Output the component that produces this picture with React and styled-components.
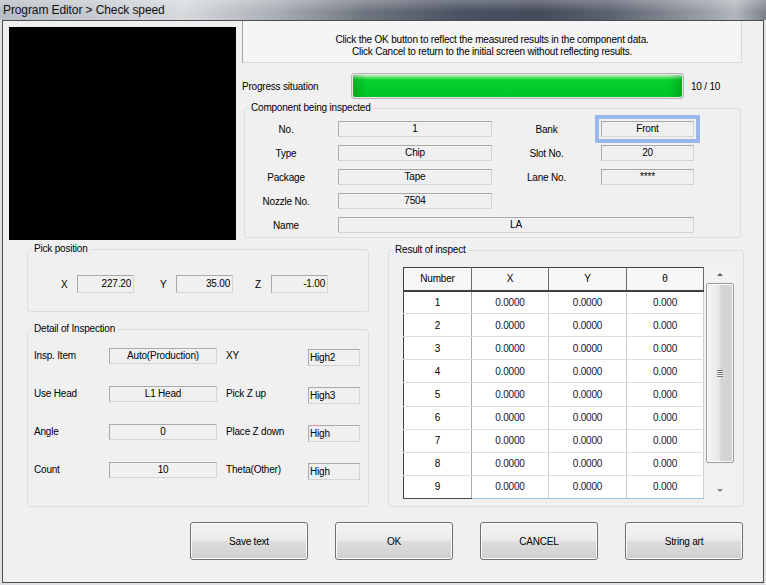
import React from 'react';
import styled, { createGlobalStyle } from 'styled-components';

const GlobalStyle = createGlobalStyle`
  html, body {
    margin: 0;
    padding: 0;
    background: #e2e4e7;
  }
  body {
    font-family: "Liberation Sans", Arial, sans-serif;
    font-size: 10px;
    letter-spacing: -0.2px;
    color: #000;
  }
  * {
    box-sizing: border-box;
  }
`;

const component = [
  { label: 'No.', value: '1', side: 'Bank', sideValue: 'Front', focus: true },
  { label: 'Type', value: 'Chip', side: 'Slot No.', sideValue: '20' },
  { label: 'Package', value: 'Tape', side: 'Lane No.', sideValue: '****' },
  { label: 'Nozzle No.', value: '7504' },
];

const details = [
  { label: 'Insp. Item', value: 'Auto(Production)', side: 'XY', sideValue: 'High2' },
  { label: 'Use Head', value: 'L1 Head', side: 'Pick Z up', sideValue: 'High3' },
  { label: 'Angle', value: '0', side: 'Place Z down', sideValue: 'High' },
  { label: 'Count', value: '10', side: 'Theta(Other)', sideValue: 'High' },
];

const results = [1, 2, 3, 4, 5, 6, 7, 8, 9].map((n) => ({
  n,
  x: '0.0000',
  y: '0.0000',
  t: '0.000',
}));

function App() {
  return (
    <Window>
      <GlobalStyle />
      <TitleBar>Program Editor &gt; Check speed</TitleBar>
      <Client>
        <TopSection>
          <Camera />
          <RightColumn>
            <MessageBox>
              <div>Click the OK button to reflect the measured results in the component data.</div>
              <div>Click Cancel to return to the initial screen without reflecting results.</div>
            </MessageBox>
            <ProgressRow>
              <ProgressLabel>Progress situation</ProgressLabel>
              <ProgressBar>
                <ProgressFill />
              </ProgressBar>
              <ProgressCount>10 / 10</ProgressCount>
            </ProgressRow>
            <ComponentGroup>
              <Legend>Component being inspected</Legend>
              <ComponentGrid>
                {component.map((row) => (
                  <React.Fragment key={row.label}>
                    <CenterLabel $pad={11}>{row.label}</CenterLabel>
                    <Field $align="center">{row.value}</Field>
                    {row.side ? (
                      <>
                        <CenterLabel>{row.side}</CenterLabel>
                        <Field $align="center" $focus={row.focus}>
                          {row.sideValue}
                        </Field>
                      </>
                    ) : (
                      <>
                        <span />
                        <span />
                      </>
                    )}
                  </React.Fragment>
                ))}
                <CenterLabel $pad={11}>Name</CenterLabel>
                <Field $align="center" $span={3}>
                  LA
                </Field>
              </ComponentGrid>
            </ComponentGroup>
          </RightColumn>
        </TopSection>

        <MiddleSection>
          <LeftColumn>
            <PickGroup>
              <Legend>Pick position</Legend>
              <PickRow>
                <PickLabel $offset={33}>X</PickLabel>
                <PickField>227.20</PickField>
                <PickLabel $offset={26}>Y</PickLabel>
                <PickField>35.00</PickField>
                <PickLabel $offset={22}>Z</PickLabel>
                <PickField>-1.00</PickField>
              </PickRow>
            </PickGroup>
            <DetailGroup>
              <Legend>Detail of Inspection</Legend>
              <DetailGrid>
                {details.map((row) => (
                  <React.Fragment key={row.label}>
                    <DetailLabel>{row.label}</DetailLabel>
                    <Field $align="center">{row.value}</Field>
                    <DetailLabel $indent={9}>{row.side}</DetailLabel>
                    <SmallField>{row.sideValue}</SmallField>
                  </React.Fragment>
                ))}
              </DetailGrid>
            </DetailGroup>
          </LeftColumn>

          <ResultGroup>
            <Legend>Result of inspect</Legend>
            <TableWrap>
              <Table>
                <colgroup>
                  <col style={{ width: 68 }} />
                  <col style={{ width: 77 }} />
                  <col style={{ width: 78 }} />
                  <col style={{ width: 77 }} />
                </colgroup>
                <thead>
                  <tr>
                    <Th>Number</Th>
                    <Th>X</Th>
                    <Th>Y</Th>
                    <Th>θ</Th>
                  </tr>
                </thead>
                <tbody>
                  {results.map((r, i) => (
                    <tr key={r.n}>
                      <NumCell $last={i === results.length - 1}>{r.n}</NumCell>
                      <Td $last={i === results.length - 1}>{r.x}</Td>
                      <Td $last={i === results.length - 1}>{r.y}</Td>
                      <Td $last={i === results.length - 1}>{r.t}</Td>
                    </tr>
                  ))}
                </tbody>
              </Table>
              <ScrollBar>
                <ArrowUp />
                <Thumb>
                  <Grip />
                </Thumb>
                <ArrowDown />
              </ScrollBar>
            </TableWrap>
          </ResultGroup>
        </MiddleSection>

        <ButtonRow>
          <Button>Save text</Button>
          <Button>OK</Button>
          <Button>CANCEL</Button>
          <Button>String art</Button>
        </ButtonRow>
      </Client>
    </Window>
  );
}

const Window = styled.div`
  width: 766px;
  height: 585px;
  display: flex;
  flex-direction: column;
  background: #dfe1e4;
  overflow: hidden;
`;

const TitleBar = styled.div`
  height: 20px;
  line-height: 20px;
  padding-left: 3px;
  font-size: 12px;
  letter-spacing: -0.1px;
  color: #111;
  background:
    linear-gradient(to bottom, rgba(255, 255, 255, 0.25), rgba(255, 255, 255, 0) 60%),
    linear-gradient(
      90deg,
      #b8bdc4 0%,
      #cdd1d6 18%,
      #d7dadd 24%,
      #a9aeb5 36%,
      #6d737e 48%,
      #4a5161 60%,
      #444a59 70%,
      #5c6270 80%,
      #9a9fa7 92%,
      #b3b7bd 96%,
      #7b8089 100%
    );
`;

const Client = styled.div`
  flex: 1;
  margin: 0 2px 2px 2px;
  border: 1px solid #4d4d4d;
  background: #f0f0f0;
  display: flex;
  flex-direction: column;
`;

const TopSection = styled.div`
  display: flex;
  align-items: flex-start;
  padding-left: 6px;
`;

const Camera = styled.div`
  margin-top: 6px;
  width: 227px;
  height: 213px;
  background: #000;
`;

const RightColumn = styled.div`
  margin-left: 6px;
  width: 500px;
  display: flex;
  flex-direction: column;
`;

const MessageBox = styled.div`
  height: 42px;
  padding-top: 13px;
  border: 1px solid #d9d9d9;
  border-left-color: #a3a3a3;
  border-top: none;
  background: #f5f5f5;
  text-align: center;
  line-height: 12px;
`;

const ProgressRow = styled.div`
  margin-top: 10px;
  height: 26px;
  display: flex;
  align-items: center;
`;

const ProgressLabel = styled.div`
  width: 109px;
`;

const ProgressBar = styled.div`
  width: 333px;
  height: 26px;
  border: 1px solid #b4b4b4;
  border-radius: 3px;
  background: #e6e6e6;
  padding: 1px;
`;

const ProgressFill = styled.div`
  width: 100%;
  height: 100%;
  border-radius: 2px;
  background:
    linear-gradient(90deg, rgba(0, 80, 0, 0.25), rgba(0, 0, 0, 0) 4%, rgba(0, 0, 0, 0) 96%, rgba(0, 80, 0, 0.25)),
    linear-gradient(to bottom, #b8f5b8 0%, #58e06a 12%, #06d12d 22%, #00cc2a 60%, #00c22a 100%);
`;

const ProgressCount = styled.div`
  margin-left: 7px;
`;

const GroupBox = styled.div`
  position: relative;
  border: 1px solid #d5dfe5;
  border-radius: 3px;
`;

const Legend = styled.span`
  position: absolute;
  top: -7px;
  left: 4px;
  padding: 0 2px;
  line-height: 12px;
  background: #f0f0f0;
`;

const ComponentGroup = styled(GroupBox)`
  margin-top: 9px;
  margin-left: 2px;
  width: 497px;
  height: 130px;
  padding-top: 12px;
`;

const ComponentGrid = styled.div`
  display: grid;
  grid-template-columns: 93px 154px 109px 93px;
  grid-auto-rows: 16px;
  row-gap: 8px;
  align-items: center;
`;

const CenterLabel = styled.div`
  text-align: center;
  padding-right: ${(p) => p.$pad || 0}px;
`;

const Field = styled.div`
  height: 16px;
  line-height: 14px;
  border: 1px solid #d4d4d4;
  border-top-color: #a9a9a9;
  border-left-color: #a9a9a9;
  background: #f0f0f0;
  text-align: ${(p) => p.$align || 'left'};
  padding: 0 2px;
  white-space: nowrap;
  overflow: visible;
  grid-column: ${(p) => (p.$span ? `span ${p.$span}` : 'auto')};
  outline: ${(p) => (p.$focus ? '4px solid #9bb7ea' : 'none')};
  outline-offset: 2px;
`;

const MiddleSection = styled.div`
  display: flex;
  align-items: flex-start;
  margin-top: 9px;
  padding-left: 24px;
  gap: 19px;
`;

const LeftColumn = styled.div`
  width: 342px;
  display: flex;
  flex-direction: column;
`;

const PickGroup = styled(GroupBox)`
  height: 63px;
  padding-top: 25px;
`;

const PickRow = styled.div`
  display: flex;
  align-items: center;
  height: 18px;
`;

const PickLabel = styled.div`
  margin-left: ${(p) => p.$offset}px;
  width: 16px;
`;

const PickField = styled(Field)`
  width: 57px;
  height: 18px;
  line-height: 16px;
  text-align: right;
`;

const DetailGroup = styled(GroupBox)`
  margin-top: 17px;
  height: 178px;
  padding: 17px 0 0 6px;
`;

const DetailGrid = styled.div`
  display: grid;
  grid-template-columns: 75px 108px 91px 52px;
  grid-auto-rows: 17px;
  row-gap: 21px;
  align-items: center;
`;

const DetailLabel = styled.div`
  padding-left: ${(p) => p.$indent || 0}px;
  white-space: nowrap;
`;

const SmallField = styled(Field)`
  height: 17px;
  margin-top: 4px;
  line-height: 15px;
  padding-left: 1px;
`;

const ResultGroup = styled(GroupBox)`
  margin-top: 1px;
  width: 356px;
  height: 257px;
  padding: 16px 0 0 14px;
`;

const TableWrap = styled.div`
  display: flex;
  align-items: stretch;
  height: 232px;
`;

const Table = styled.table`
  width: 300px;
  table-layout: fixed;
  border-collapse: collapse;
  background: #fff;
  border-left: 1px solid #3f3f3f;
  border-top: 1px solid #3f3f3f;
  border-right: 1px solid #a8a8a8;
`;

const Th = styled.th`
  height: 23px;
  padding: 0;
  font-weight: normal;
  background: #f7f7f7;
  border-bottom: 2px solid #3f3f3f;
  border-right: 1px solid #6a6a6a;
  text-align: center;
`;

const Td = styled.td`
  height: 23px;
  padding: 0;
  text-align: center;
  color: #16122e;
  border-right: 1px solid #cfcfcf;
  border-bottom: 1px solid ${(p) => (p.$last ? '#9cc2e8' : '#dcdcdc')};
`;

const NumCell = styled(Td)`
  color: #000;
  border-right-color: #a8a8a8;
  border-bottom-color: ${(p) => (p.$last ? '#4a4a4a' : '#dcdcdc')};
`;

const ScrollBar = styled.div`
  width: 32px;
  display: flex;
  flex-direction: column;
  align-items: center;
  background: #f2f2f2;
`;

const ArrowUp = styled.div`
  margin-top: 6px;
  width: 0;
  height: 0;
  border-left: 3px solid transparent;
  border-right: 3px solid transparent;
  border-bottom: 3px solid #606060;
`;

const ArrowDown = styled.div`
  margin-top: auto;
  margin-bottom: 7px;
  width: 0;
  height: 0;
  border-left: 3px solid transparent;
  border-right: 3px solid transparent;
  border-top: 3px solid #8a8a8a;
`;

const Thumb = styled.div`
  margin-top: 7px;
  width: 28px;
  height: 180px;
  border: 1px solid #9a9a9a;
  border-radius: 2px;
  background: linear-gradient(90deg, #f4f4f4 0%, #e8e8e8 45%, #d6d6d6 55%, #d2d2d2 100%);
  box-shadow: inset 0 0 0 1px #fbfbfb;
  display: flex;
  align-items: center;
  justify-content: center;
`;

const Grip = styled.div`
  width: 6px;
  height: 7px;
  background: repeating-linear-gradient(to bottom, #7a7a7a 0 1px, #f2f2f2 1px 2px);
`;

const ButtonRow = styled.div`
  display: flex;
  gap: 27px;
  margin-top: 15px;
  padding-left: 187px;
`;

const Button = styled.button`
  width: 118px;
  height: 38px;
  border: 1px solid #707070;
  border-radius: 3px;
  font-family: "Liberation Sans", Arial, sans-serif;
  font-size: 10px;
  letter-spacing: -0.2px;
  color: #000;
  background: linear-gradient(to bottom, #f3f3f3 0%, #ebebeb 48%, #dddddd 52%, #cfcfcf 100%);
  box-shadow: inset 0 0 0 1px #fbfbfb;
  padding: 0;
`;

export default App;
